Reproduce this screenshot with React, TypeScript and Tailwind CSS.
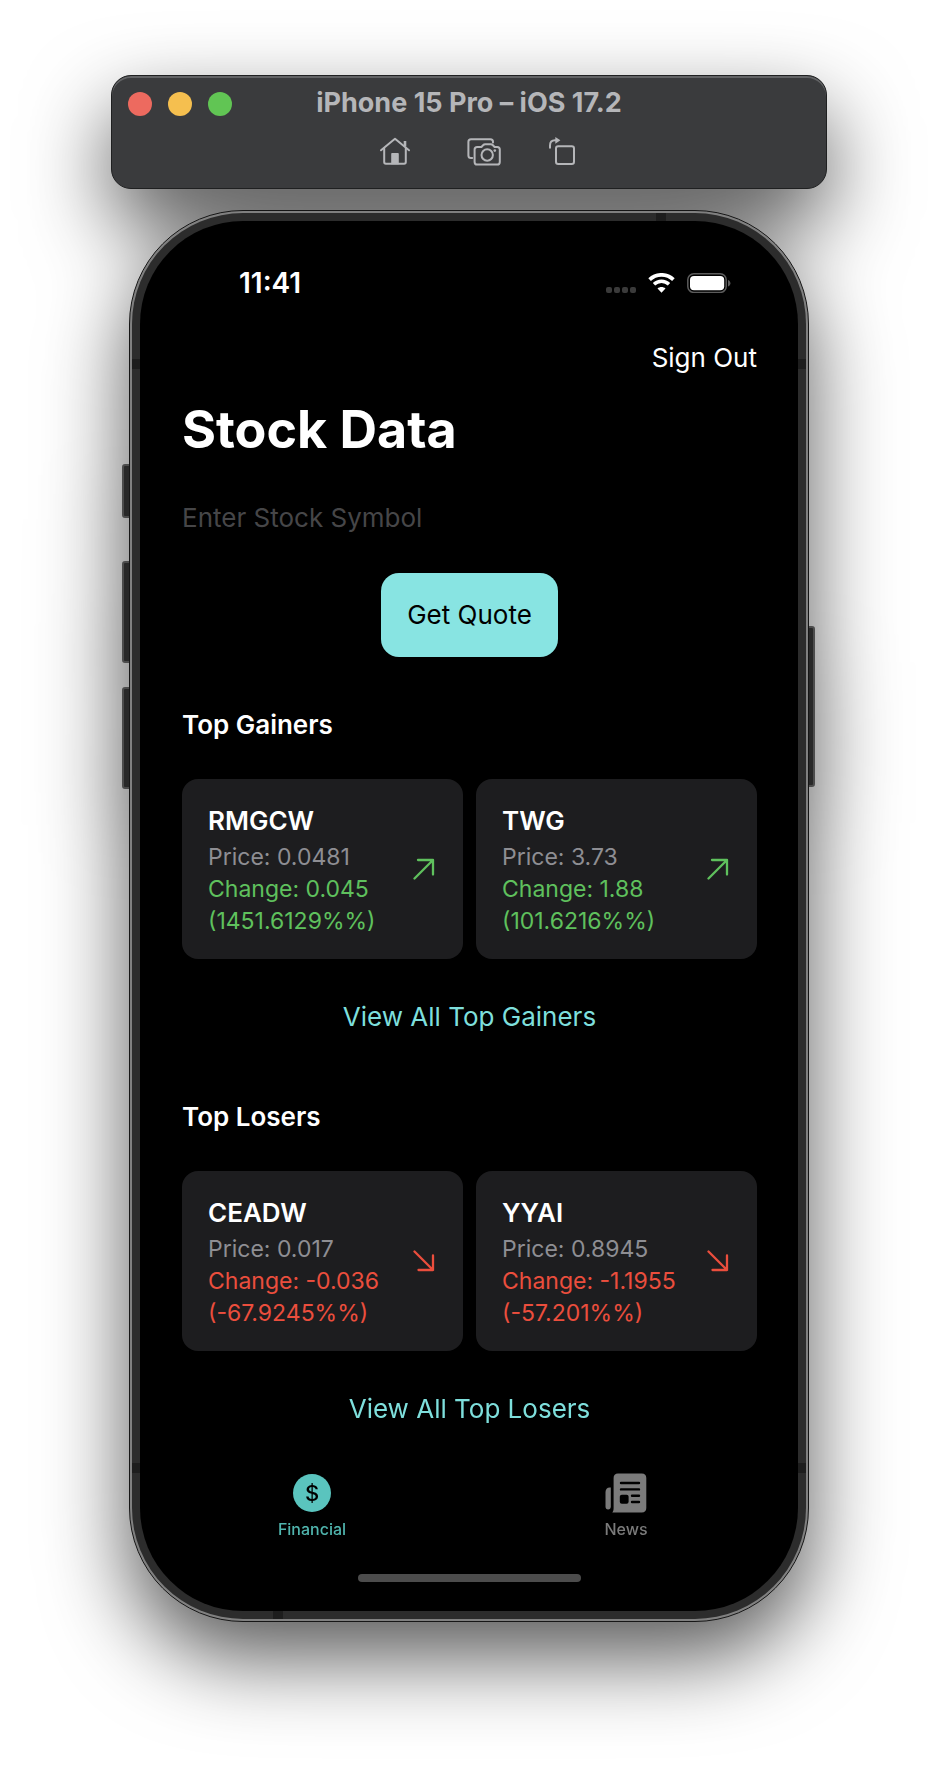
type Quote = {
  symbol: string;
  price: string;
  change: string;
  percent: string;
};

const gainers: Quote[] = [
  { symbol: "RMGCW", price: "0.0481", change: "0.045", percent: "1451.6129%" },
  { symbol: "TWG", price: "3.73", change: "1.88", percent: "101.6216%" },
];

const losers: Quote[] = [
  { symbol: "CEADW", price: "0.017", change: "-0.036", percent: "-67.9245%" },
  { symbol: "YYAI", price: "0.8945", change: "-1.1955", percent: "-57.201%" },
];

function HomeIcon() {
  return (
    <svg viewBox="0 0 32 30" className="h-[30px] w-8" fill="none" stroke="currentColor" strokeWidth="2" strokeLinecap="round" strokeLinejoin="round">
      <path d="M2 14.3 16 2.8l14 11.5" />
      <path d="M5.2 12.5v13.6c0 1.1.6 1.7 1.7 1.7h18.2c1.1 0 1.7-.6 1.7-1.7V12.5" />
      <path d="M26 10.5V5" strokeWidth="2.6" strokeLinecap="butt" />
      <path d="M12.2 28.2V17.800c0-.6.3-.9.9-.9h5.800c.6 0 .9.3.9.9v10.400z" fill="currentColor" stroke="none" />
    </svg>
  );
}

function CameraIcon() {
  return (
    <svg viewBox="0 0 36 30" className="h-[30px] w-9" fill="none" stroke="currentColor" strokeWidth="2" strokeLinecap="round" strokeLinejoin="round">
      <path d="M27 6.500V5.800c0-1.700-.9-2.600-2.600-2.600H5c-1.700 0-2.600.9-2.600 2.600v13.700c0 1.700.9 2.600 2.600 2.600h1.200" />
      <path d="M12.800 11h-1.600c-1.700 0-2.600.9-2.600 2.600v12.300c0 1.700.9 2.600 2.600 2.600h20c1.700 0 2.600-.9 2.600-2.600V13.600c0-1.700-.9-2.600-2.600-2.600h-2.600l-1.900-2c-.5-.6-1-.8-1.800-.8h-5.800c-.8 0-1.300.2-1.800.8l-1.900 2z" />
      <circle cx="21.200" cy="19" r="5.700" />
      <circle cx="28.800" cy="14.600" r="1.300" fill="currentColor" stroke="none" />
    </svg>
  );
}

function RotateIcon() {
  return (
    <svg viewBox="0 0 28 30" className="h-[30px] w-7" fill="none" stroke="currentColor" strokeWidth="2" strokeLinecap="round" strokeLinejoin="round">
      <rect x="8" y="10.300" width="18" height="17.600" rx="2.200" />
      <path d="M2 11.800V9.500C2 6.300 3.800 4.300 7 4.300h1" />
      <path d="M7.300.9v6.800L12.400 4.300z" fill="currentColor" stroke="none" />
    </svg>
  );
}

function WifiIcon() {
  return (
    <svg viewBox="0 0 27 20" className="h-5 w-[27px]" fill="none" stroke="#fff">
      <path d="M1.600 6.600a17.200 17.200 0 0 1 23.800 0" strokeWidth="3.700" />
      <path d="M6 11.300a10.800 10.800 0 0 1 15 0" strokeWidth="3.500" />
      <path d="M13.500 19.700l-4-4.200c2.200-2 5.800-2 8 0z" fill="#fff" stroke="none" />
    </svg>
  );
}

function BatteryIcon() {
  return (
    <svg viewBox="0 0 44 20" className="h-5 w-11">
      <rect x=".8" y=".8" width="38.400" height="18.600" rx="6" fill="none" stroke="#5c5c5c" strokeWidth="1.500" />
      <rect x="3" y="3" width="34.200" height="14.200" rx="4" fill="#fff" />
      <path d="M41 7v6.400c1.500-.6 2.400-1.800 2.400-3.200S42.500 7.600 41 7z" fill="#5c5c5c" />
    </svg>
  );
}

function NewsIcon() {
  return (
    <svg viewBox="0 0 42 40" className="h-10 w-[42px]">
      <path d="M5.800 14.500v18.700c0 2.200-1 3.300-2.700 3.300S.5 35.400.5 33.200V19c0-2.700 1.600-4.500 4.300-4.500z" fill="#7b7b7b" />
      <path d="M13 .5h23.800c2.900 0 4.500 1.600 4.500 4.500v29.900c0 2.900-1.600 4.500-4.500 4.500H7.300c1.100-1.300 1.300-2.600 1.300-4.500V5c0-2.900 1.600-4.500 4.400-4.500z" fill="#7b7b7b" />
      <path d="M16 10h18M16 16.400h18M27 22.800h7M27 29h7" stroke="#000" strokeWidth="2.400" strokeLinecap="round" />
      <rect x="14.800" y="21.800" width="8.800" height="9" rx="2" fill="#000" />
    </svg>
  );
}

function TrendArrow({ down }: { down: boolean }) {
  return (
    <svg viewBox="0 0 22 22" className="h-[22px] w-[22px] shrink-0" fill="none" stroke="currentColor" strokeWidth="2.300" strokeLinecap="round" strokeLinejoin="round">
      {down ? <path d="M1.500 1.500 20 20M20 5.500V20H5.500" /> : <path d="M1.500 20.500 20 2M5 2h15v14.500" />}
    </svg>
  );
}

function QuoteCard({ quote, down }: { quote: Quote; down: boolean }) {
  const tone = down ? "text-[#eb4e3d]" : "text-[#5fc15d]";
  return (
    <li className="flex h-[180px] items-center justify-between rounded-2xl bg-[#1d1d1f] pr-7 pl-[26px]">
      <div className="pt-1 text-[23px] leading-8 whitespace-nowrap">
        <h3 className="pb-1 text-[26px] font-semibold text-white">{quote.symbol}</h3>
        <p className="text-[#8e8e93]">Price: {quote.price}</p>
        <p className={tone}>
          Change: {quote.change}
          <br />({quote.percent}%)
        </p>
      </div>
      <span className={tone}>
        <TrendArrow down={down} />
      </span>
    </li>
  );
}

function MoverSection({ title, quotes, down = false }: { title: string; quotes: Quote[]; down?: boolean }) {
  return (
    <section className="flex flex-col">
      <h2 className="text-[26px] leading-8 font-semibold text-white">{title}</h2>
      <ul className="mt-[38px] grid grid-cols-2 gap-[13px]">
        {quotes.map((quote) => (
          <QuoteCard key={quote.symbol} quote={quote} down={down} />
        ))}
      </ul>
      <a href="#" className="mt-[42px] self-center text-[26px] leading-8 text-[#7edfdc]">
        View All {title}
      </a>
    </section>
  );
}

function Toolbar() {
  return (
    <header className="w-full rounded-[20px] border border-[#1f2021] bg-[#3a3b3d] pt-[11px] pb-[22px] text-[#b5b6b9] shadow-[inset_0_2px_0_#626365]">
      <div className="grid grid-cols-[1fr_auto_1fr] items-center">
        <div className="flex gap-4 pt-0.5 pl-4">
          <button aria-label="Close" className="size-6 rounded-full bg-[#ed6a5f]" />
          <button aria-label="Minimize" className="size-6 rounded-full bg-[#f5bf4f]" />
          <button aria-label="Zoom" className="size-6 rounded-full bg-[#61c554]" />
        </div>
        <h1 className="text-[27px] leading-8 font-bold">iPhone 15 Pro – iOS 17.2</h1>
      </div>
      <div className="mt-[17px] flex items-center justify-center pl-4">
        <button aria-label="Home">
          <HomeIcon />
        </button>
        <button aria-label="Screenshot" className="ml-[55px]">
          <CameraIcon />
        </button>
        <button aria-label="Rotate" className="ml-[46px]">
          <RotateIcon />
        </button>
      </div>
    </header>
  );
}

function SideButton({ className }: { className: string }) {
  return <span className={`absolute w-3 rounded-[3px] border-2 border-[#4c4c4c] bg-[#282828] ${className}`} />;
}

function Phone() {
  return (
    <div className="relative mt-[21px] w-full max-w-[680px]">
      <SideButton className="top-[254px] -left-[7px] h-[54px]" />
      <SideButton className="top-[351px] -left-[7px] h-[102px]" />
      <SideButton className="top-[477px] -left-[7px] h-[102px]" />
      <SideButton className="top-[416px] -right-[6px] h-[161px]" />
      <div className="relative overflow-hidden rounded-[114px] border border-[#161616] bg-[#808080] p-0.5">
        <div className="relative overflow-hidden rounded-[111px] bg-[#2c2c2c] p-2">
          <span className="absolute top-[146px] left-0 h-2.5 w-full bg-[#1d1d1d]" />
          <span className="absolute bottom-[146px] left-0 h-2.5 w-full bg-[#1d1d1d]" />
          <span className="absolute top-0 right-[140px] h-2 w-2.5 bg-[#1d1d1d]" />
          <span className="absolute bottom-0 left-[141px] h-2 w-2.5 bg-[#1d1d1d]" />
          <div className="relative rounded-[103px] bg-black pt-[45px] pb-[29px]">
            <div className="flex h-[34px] items-center justify-between pr-[67px] pl-[99px]">
              <time className="text-[28px] leading-8 font-semibold text-white">11:41</time>
              <div className="flex items-center">
                <div className="flex gap-0.5 pt-[14px] pr-3">
                  {[0, 1, 2, 3].map((dot) => (
                    <span key={dot} className="size-1.5 rounded-[2px] bg-[#3a3a3a]" />
                  ))}
                </div>
                <WifiIcon />
                <div className="pl-3">
                  <BatteryIcon />
                </div>
              </div>
            </div>
            <main className="flex flex-col pr-[41px] pl-[42px]">
              <button className="mt-[42px] self-end text-[26px] leading-8 text-white">Sign Out</button>
              <h1 className="mt-6 text-[52px] leading-[64px] font-bold text-white">Stock Data</h1>
              <input
                aria-label="Stock symbol"
                placeholder="Enter Stock Symbol"
                className="mt-10 h-8 bg-transparent text-[26px] leading-8 text-white outline-none placeholder:text-[#464648]"
              />
              <button className="mt-[39px] mb-[52px] h-[84px] self-center rounded-[18px] bg-[#88e4e2] px-[26px] text-[26px] leading-8 text-black">
                Get Quote
              </button>
              <MoverSection title="Top Gainers" quotes={gainers} />
              <div className="h-[68px]" />
              <MoverSection title="Top Losers" quotes={losers} down />
            </main>
            <nav className="mt-12 grid grid-cols-2 px-[15px] text-[16px] leading-5 font-medium">
              <a href="#" className="flex flex-col items-center gap-1.5 text-[#50b5ae]">
                <span className="flex h-10 items-center">
                  <span aria-hidden="true" className="flex size-[38px] items-center justify-center rounded-full bg-[#5ac4be] text-[22px] leading-6 text-black">
                    $
                  </span>
                </span>
                Financial
              </a>
              <a href="#" className="flex flex-col items-center gap-1.5 text-[#7b7b7b]">
                <NewsIcon />
                News
              </a>
            </nav>
            <div className="mx-auto mt-[35px] h-2 w-[223px] rounded-full bg-[#4c4c4c]" />
          </div>
        </div>
      </div>
    </div>
  );
}

export default function App() {
  return (
    <div className="flex min-h-screen justify-center bg-white px-6 pt-[75px] pb-[149px] font-['Inter',sans-serif]">
      <div className="flex w-full max-w-[716px] flex-col items-center [filter:drop-shadow(0_36px_42px_rgba(0,0,0,0.65))]">
        <Toolbar />
        <Phone />
      </div>
    </div>
  );
}
